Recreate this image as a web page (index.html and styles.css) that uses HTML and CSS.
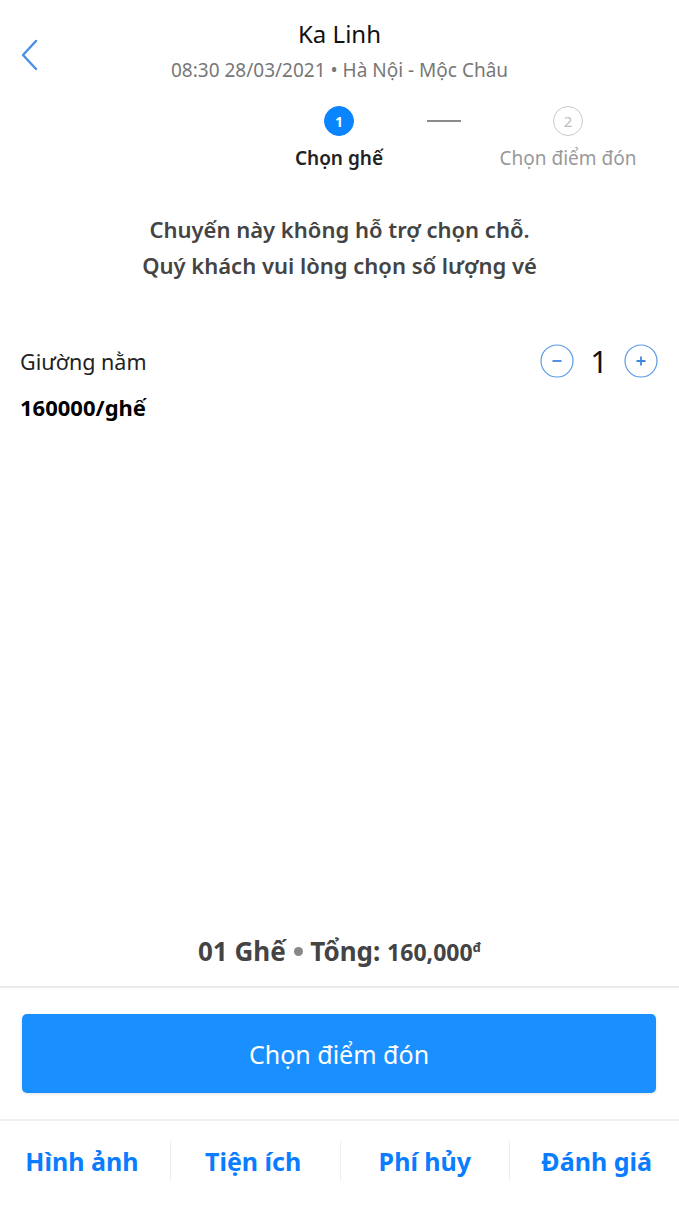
FILE: index.html
```html
<!DOCTYPE html>
<html lang="vi">
<head>
<meta charset="utf-8">
<link rel="stylesheet" href="styles.css">
</head>
<body>
<div class="screen">
  <header class="header">
    <button class="back" aria-label="Back">
      <svg width="18" height="32" viewBox="0 0 18 32"><path d="M16 2 L3 16 L16 30" fill="none" stroke="#4a8fe6" stroke-width="2.4" stroke-linecap="round" stroke-linejoin="round"/></svg>
    </button>
    <div class="title">Ka Linh</div>
    <div class="subtitle">08:30 28/03/2021 • Hà Nội - Mộc Châu</div>
  </header>

  <div class="steps">
    <div class="step active">
      <div class="dot">1</div>
      <div class="label">Chọn ghế</div>
    </div>
    <div class="step-line"></div>
    <div class="step">
      <div class="dot">2</div>
      <div class="label">Chọn điểm đón</div>
    </div>
  </div>

  <p class="notice">Chuyến này không hỗ trợ chọn chỗ.<br>Quý khách vui lòng chọn số lượng vé</p>

  <div class="ticket">
    <div class="ticket-row">
      <span class="ticket-name">Giường nằm</span>
      <div class="qty">
        <span class="qbtn">
          <svg width="34" height="34" viewBox="0 0 34 34"><circle cx="17" cy="17" r="16" fill="none" stroke="#5b9be6" stroke-width="1.2"/><path d="M12.5 17 H21.5" stroke="#3f86de" stroke-width="1.8"/></svg>
        </span>
        <span class="qnum">1</span>
        <span class="qbtn">
          <svg width="34" height="34" viewBox="0 0 34 34"><circle cx="17" cy="17" r="16" fill="none" stroke="#5b9be6" stroke-width="1.2"/><path d="M12.5 17 H21.5 M17 12.5 V21.5" stroke="#3f86de" stroke-width="1.8"/></svg>
        </span>
      </div>
    </div>
    <div class="price">160000/ghế</div>
  </div>

  <div class="spacer"></div>

  <div class="summary">01 Ghế <span class="bullet"></span> Tổng: <span class="total">160,000<sup>đ</sup></span></div>

  <div class="action">
    <button class="primary">Chọn điểm đón</button>
  </div>

  <nav class="tabs">
    <a class="tab">Hình ảnh</a>
    <a class="tab">Tiện ích</a>
    <a class="tab">Phí hủy</a>
    <a class="tab">Đánh giá</a>
  </nav>
</div>
</body>
</html>
```

FILE: styles.css
```css
* { box-sizing: border-box; }
html, body { margin: 0; padding: 0; background: #fff; }
body {
  font-family: "Noto Sans", "Open Sans", sans-serif;
  color: #222;
}
.screen {
  width: 679px;
  height: 1209px;
  display: flex;
  flex-direction: column;
}
.header {
  position: relative;
  text-align: center;
  padding-top: 16px;
}
.back {
  position: absolute;
  left: 20px;
  top: 39px;
  border: 0;
  background: none;
  padding: 0;
  width: 18px;
  height: 32px;
}
.title {
  font-size: 24px;
  line-height: 36px;
  color: #111;
}
.subtitle {
  font-size: 19px;
  line-height: 26px;
  color: #777;
  margin-top: 5px;
}
.steps {
  display: flex;
  align-items: flex-start;
  margin-top: 23px;
}
.step {
  display: flex;
  flex-direction: column;
  align-items: center;
}
.step.active {
  width: 120px;
  margin-left: 279px;
}
.step:last-child {
  width: 160px;
  margin-left: 27px;
}
.dot {
  width: 30px;
  height: 30px;
  border-radius: 50%;
  border: 1.5px solid #c8c8c8;
  color: #bdbdbd;
  font-size: 15px;
  display: flex;
  align-items: center;
  justify-content: center;
}
.step.active .dot {
  background: #0a84ff;
  border-color: #0a84ff;
  color: #fff;
  font-weight: 700;
  font-size: 14px;
}
.label {
  margin-top: 9px;
  font-size: 19px;
  line-height: 26px;
  color: #999;
}
.step.active .label {
  color: #222;
  font-weight: 600;
}
.step-line {
  width: 34px;
  height: 2px;
  background: #8a8a8a;
  margin: 14px 0 0 28px;
}
.notice {
  margin: 40px 0 0;
  text-align: center;
  font-size: 22px;
  line-height: 36px;
  font-weight: 600;
  color: #444;
}
.ticket {
  padding: 0 21px 0 20px;
  margin-top: 58px;
}
.ticket-row {
  display: flex;
  align-items: center;
  justify-content: space-between;
}
.ticket-name {
  font-size: 21.5px;
  color: #222;
}
.qty {
  display: flex;
  align-items: center;
  gap: 11px;
}
.qbtn { display: flex; }
.qnum {
  font-size: 31px;
  line-height: 40px;
  color: #111;
  width: 28px;
  text-align: center;
}
.price {
  margin-top: 11px;
  font-size: 22px;
  font-weight: 700;
  color: #000;
}
.spacer { flex: 1; }
.summary {
  text-align: center;
  font-size: 26px;
  font-weight: 700;
  color: #444;
  line-height: 36px;
  padding-bottom: 16px;
  border-bottom: 2px solid #ebebeb;
}
.bullet {
  display: inline-block;
  width: 9px;
  height: 9px;
  border-radius: 50%;
  background: #888;
  vertical-align: 5px;
  margin: 0 1px;
}
.total { font-size: 23px; }
.total sup { font-size: 13px; vertical-align: 9px; }
.action {
  padding: 26px 23px 26px 22px;
  border-bottom: 2px solid #f0f0f0;
}
.primary {
  width: 100%;
  height: 79px;
  border: 0;
  border-radius: 5px;
  background: #1a8fff;
  color: #fff;
  font-family: inherit;
  font-size: 25px;
  box-shadow: 0 1px 3px rgba(0,0,0,0.12);
}
.tabs {
  display: grid;
  grid-template-columns: repeat(4, 1fr);
  padding: 20px 0 28px;
}
.tab {
  text-align: center;
  font-size: 25px;
  font-weight: 700;
  color: #0a7cff;
  line-height: 40px;
  border-left: 1.5px solid #eee;
}
.tab:first-child { border-left: 0; padding-right: 6px; }
.tab:nth-child(2) { padding-right: 4px; }
.tab:last-child { padding-left: 4px; }
```
